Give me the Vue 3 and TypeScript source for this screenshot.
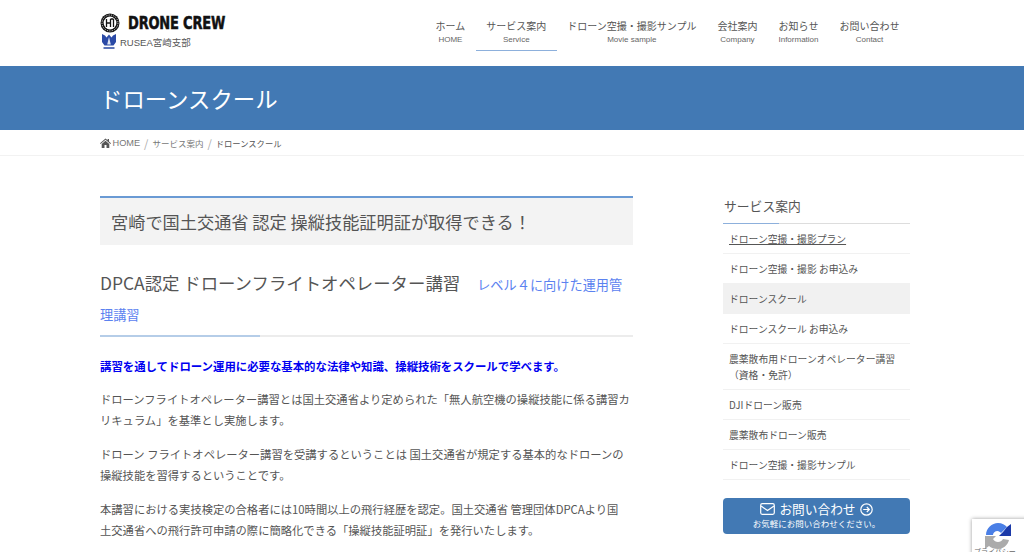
<script setup lang="ts">
interface NavItem { ja: string; en: string; active?: boolean }
const nav: NavItem[] = [
  { ja: 'ホーム', en: 'HOME' },
  { ja: 'サービス案内', en: 'Service', active: true },
  { ja: 'ドローン空撮・撮影サンプル', en: 'Movie sample' },
  { ja: '会社案内', en: 'Company' },
  { ja: 'お知らせ', en: 'Information' },
  { ja: 'お問い合わせ', en: 'Contact' },
]
interface SideItem { label: string; current?: boolean; link?: boolean }
const side: SideItem[] = [
  { label: 'ドローン空撮・撮影プラン', link: true },
  { label: 'ドローン空撮・撮影 お申込み' },
  { label: 'ドローンスクール', current: true },
  { label: 'ドローンスクール お申込み' },
  { label: '農薬散布用ドローンオペレーター講習（資格・免許）' },
  { label: 'DJIドローン販売' },
  { label: '農薬散布ドローン販売' },
  { label: 'ドローン空撮・撮影サンプル' },
]
</script>

<template>
  <div class="page">
    <header class="header">
      <div class="wrap header-in">
        <div class="logo">
          <div class="logo-top">
            <svg width="20" height="20" viewBox="0 0 20 20">
              <circle cx="10" cy="10" r="9.500" fill="#111" />
              <circle cx="10" cy="10" r="6.400" fill="#fff" />
              <circle cx="10" cy="10" r="8" fill="none" stroke="#fff" stroke-width=".8" stroke-dasharray="1.200 1.200" />
              <path d="M6.500 6v8M6.500 10h4M10.500 6v8M13.500 6v8M10.500 6h3" stroke="#111" stroke-width="1.300" fill="none" />
            </svg>
            <span class="logo-name">DRONE CREW</span>
          </div>
          <div class="logo-sub">
            <svg width="14" height="16" viewBox="0 0 14 16">
              <path d="M0 0l3 1.500 1.500 2L7 .5l2.500 3L11 1.500 14 0v8l-2.500 3.500H2.500L0 8z" fill="#2b4aa6" />
              <path d="M7 3l1.800 7.500H5.200z" fill="#dfe6f5" />
              <rect x="1.500" y="13" width="11" height="2" fill="#5c74b8" />
            </svg>
            <span>RUSEA宮崎支部</span>
          </div>
        </div>
        <nav class="nav">
          <a v-for="n in nav" :key="n.en" class="nav-item" :class="{ active: n.active }">
            <span class="nav-ja">{{ n.ja }}</span>
            <span class="nav-en">{{ n.en }}</span>
          </a>
        </nav>
      </div>
    </header>

    <div class="title-bar">
      <div class="wrap"><h1>ドローンスクール</h1></div>
    </div>

    <div class="crumbs">
      <div class="wrap crumbs-in">
        <svg width="11" height="10" viewBox="0 0 11 10">
          <path d="M5.500 .5L0 5.200l.6.7L5.500 1.800l4.900 4.100.6-.7L9 3.500V1H7.600v1.300zM1.700 6v4h2.800V7h2v3h2.800V6L5.500 2.800z" fill="#555" />
        </svg>
        <span class="c-home">HOME</span>
        <span class="c-sep">/</span>
        <span>サービス案内</span>
        <span class="c-sep">/</span>
        <span class="c-now">ドローンスクール</span>
      </div>
    </div>

    <div class="wrap body">
      <main class="main">
        <h2 class="box-title">宮崎で国土交通省 認定 操縦技能証明証が取得できる！</h2>
        <h3 class="sec-title">DPCA認定 ドローンフライトオペレーター講習<span class="sec-link">レベル４に向けた運用管理講習</span></h3>
        <p class="lead">講習を通してドローン運用に必要な基本的な法律や知識、操縦技術をスクールで学べます。</p>
        <p>ドローンフライトオペレーター講習とは国土交通省より定められた「無人航空機の操縦技能に係る講習カリキュラム」を基準とし実施します。</p>
        <p>ドローン フライトオペレーター講習を受講するということは 国土交通省が規定する基本的なドローンの操縦技能を習得するということです。</p>
        <p>本講習における実技検定の合格者には10時間以上の飛行経歴を認定。国土交通省 管理団体DPCAより国<br />土交通省への飛行許可申請の際に簡略化できる「操縦技能証明証」を発行いたします。</p>
      </main>
      <aside class="aside">
        <h4 class="side-title">サービス案内</h4>
        <ul class="side-list">
          <li v-for="s in side" :key="s.label" :class="{ current: s.current, link: s.link }">
            <span>{{ s.label }}</span>
          </li>
        </ul>
        <a class="cta">
          <span class="cta-main">
            <svg width="15" height="12" viewBox="0 0 15 12" fill="none" stroke="#fff" stroke-width="1.200">
              <rect x=".7" y=".7" width="13.600" height="10.600" rx="1.500" />
              <path d="M1 3l6.500 4.500L14 3" />
            </svg>
            <span>お問い合わせ</span>
            <svg width="13" height="13" viewBox="0 0 13 13" fill="none" stroke="#fff" stroke-width="1.200">
              <circle cx="6.500" cy="6.500" r="5.700" />
              <path d="M3.200 6.500h6M6.800 4l2.500 2.500L6.800 9" />
            </svg>
          </span>
          <span class="cta-sub">お気軽にお問い合わせください。</span>
        </a>
      </aside>
    </div>

    <div class="recaptcha">
      <svg width="30" height="27" viewBox="0 0 30 27">
        <path d="M3 13C3 6 9 1 15 1c4 0 7 2 9 4l-6 6c-1-1-2-2-3.500-2-2.500 0-4.500 2-4.500 4z" fill="#4a7fe6" />
        <path d="M28 2v12H16l4-4 4-5z" fill="#1c3aa9" />
        <path d="M2 14h11l-3 3c1 2 3 3 5 3 2 0 4-1 5-3l6 1c-1 5-6 9-11 9-4 0-7-1-9-3l-4 3z" fill="#ababab" />
      </svg>
      <span class="rc-text">プライバシー</span>
    </div>
  </div>
</template>

<style>
html, body { margin: 0; background: #fff; overflow: hidden; }
</style>

<style scoped>
.page {
  position: relative;
  height: 552px;
  overflow: hidden;
  background: #fff;
  color: #555;
  font-family: "Noto Sans CJK JP", "Liberation Sans", sans-serif;
}
.wrap { width: 810px; margin: 0 0 0 100px; }
.header { height: 66px; box-sizing: border-box; }
.header-in { display: flex; justify-content: space-between; align-items: flex-start; }
.logo { padding-top: 13px; display: flex; flex-direction: column; }
.logo-top { display: flex; align-items: center; gap: 8px; height: 20px; }
.logo-name {
  font-family: "DejaVu Sans Condensed", "DejaVu Sans", sans-serif;
  font-weight: 700;
  font-size: 17px;
  line-height: 20px;
  color: #111;
  letter-spacing: -.2px;
  -webkit-text-stroke: .5px #111;
  white-space: nowrap;
  transform: scaleX(.85);
  transform-origin: left center;
}
.logo-sub {
  display: flex;
  align-items: center;
  gap: 4px;
  margin: 1px 0 0 2px;
  font-size: 9.500px;
  line-height: 15px;
  color: #555;
  font-family: "Liberation Sans", "Noto Sans CJK JP", sans-serif;
}
.nav { display: flex; padding-top: 18px; }
.nav-item {
  display: flex;
  flex-direction: column;
  align-items: center;
  height: 32px;
  padding: 0 10.500px;
  white-space: nowrap;
}
.nav-item.active { border-bottom: 1px solid #8db0dc; }
.nav-ja { font-size: 10px; line-height: 15px; color: #555; }
.nav-en { font-size: 8px; line-height: 11px; margin-top: 1px; color: #666; font-family: "Liberation Sans", sans-serif; }
.title-bar { height: 64px; background: #4279b4; display: flex; align-items: center; }
.title-bar h1 { margin: 0; font-size: 22.400px; font-weight: 400; line-height: 32px; color: #fff; }
.crumbs { height: 26px; border-bottom: 1px solid #f2f2f2; box-sizing: border-box; }
.crumbs-in {
  display: flex;
  align-items: center;
  height: 25px;
  font-size: 8.500px;
  color: #777;
}
.c-home { margin-left: 1.500px; font-family: "Liberation Sans", sans-serif; font-size: 9.200px; }
.c-sep { margin: 0 4px; color: #aaa; font-size: 11px; }
.c-now { color: #555; font-size: 8.300px; }
.body { display: flex; justify-content: space-between; padding-top: 40px; }
.main { width: 533px; }
.box-title {
  margin: 0;
  height: 49px;
  box-sizing: border-box;
  padding: 0 11px;
  border-top: 2px solid #6a9ad4;
  background: #f3f3f3;
  font-size: 17.200px;
  font-weight: 400;
  line-height: 47px;
  color: #555;
  white-space: nowrap;
}
.sec-title {
  position: relative;
  margin: 24px 0 0;
  padding-bottom: 6px;
  border-bottom: 2px solid #ececec;
  font-size: 17.400px;
  font-weight: 400;
  line-height: 28px;
  color: #555;
}
.sec-title::after {
  content: "";
  position: absolute;
  left: 0;
  bottom: -2px;
  width: 160px;
  height: 2px;
  background: #b5cde8;
}
.sec-link { margin-left: 17px; font-size: 13.200px; color: #5b82f0; }
.lead { margin: 20px 0 0; font-size: 11.400px; line-height: 18px; font-weight: 700; color: #0000f0; }
p { margin: 14px 0 0; font-size: 11.300px; line-height: 20.500px; color: #555; }
.aside { width: 187px; }
.side-title {
  position: relative;
  margin: 0;
  padding-left: 1px;
  height: 27px;
  border-bottom: 1px solid #ddd;
  font-size: 12.800px;
  font-weight: 400;
  line-height: 20px;
  color: #555;
}
.side-title::after {
  content: "";
  position: absolute;
  left: 0;
  bottom: -1px;
  width: 56px;
  height: 1px;
  background: #8db0dc;
}
.side-list { list-style: none; margin: 0; padding: 0; }
.side-list li {
  padding: 7px 5px 6px 6px;
  border-bottom: 1px solid #f1f1f1;
  font-size: 9.800px;
  line-height: 16px;
  color: #555;
}
.side-list li.link span { text-decoration: underline; }
.side-list li.current { background: #f1f1f1; }
.cta {
  display: flex;
  flex-direction: column;
  align-items: center;
  height: 36px;
  margin-top: 18px;
  background: #4279b4;
  border-radius: 4px;
  color: #fff;
}
.cta-main {
  display: flex;
  align-items: center;
  gap: 4px;
  font-size: 12.700px;
  line-height: 18px;
  margin-top: 2px;
}
.cta-sub { font-size: 8.500px; line-height: 11px; }
.recaptcha {
  position: absolute;
  left: 972px;
  top: 519px;
  width: 60px;
  height: 40px;
  background: #fff;
  box-shadow: 0 0 4px rgba(0, 0, 0, .4);
  padding: 3px 0 0 11px;
  box-sizing: border-box;
}
.recaptcha svg { display: block; }
.rc-text { position: absolute; left: 2px; top: 28px; font-size: 7px; line-height: 9px; color: #666; white-space: nowrap; }
</style>
